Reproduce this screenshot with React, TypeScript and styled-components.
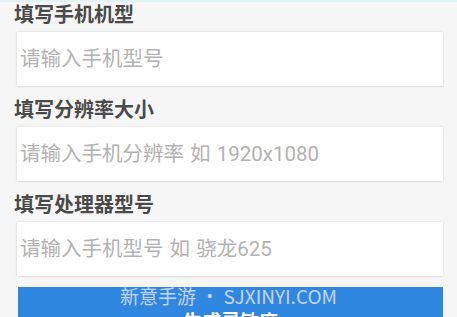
import React from 'react';
import styled, { createGlobalStyle } from 'styled-components';

const GlobalStyle = createGlobalStyle`
  html, body {
    margin: 0;
    padding: 0;
    background: #f6f6f6;
    font-family: "Noto Sans CJK SC", "Noto Sans", sans-serif;
  }
`;

const fields = [
  { label: '填写手机机型', placeholder: '请输入手机型号' },
  { label: '填写分辨率大小', placeholder: '请输入手机分辨率 如 1920x1080' },
  { label: '填写处理器型号', placeholder: '请输入手机型号 如 骁龙625' },
];

export default function App() {
  return (
    <Page>
      <GlobalStyle />
      {fields.map((f, i) => (
        <Field key={f.label} first={i === 0}>
          <Label>{f.label}</Label>
          <Input placeholder={f.placeholder} />
        </Field>
      ))}
      <SubmitButton type="button">生成灵敏度</SubmitButton>
      <Watermark>新意手游 • SJXINYI.COM</Watermark>
    </Page>
  );
}

const Page = styled.div`
  position: relative;
  height: 317px;
  overflow: hidden;
  border-top: 2px solid #e2f3f7;
  display: flex;
  flex-direction: column;
  box-sizing: border-box;
`;

const Field = styled.div<{ first?: boolean }>`
  display: flex;
  flex-direction: column;
  margin-top: ${(p) => (p.first ? '0' : '11px')};
`;

const Label = styled.div`
  padding-left: 14px;
  margin-bottom: 6px;
  line-height: 24px;
  font-size: 20px;
  font-weight: 700;
  color: #4a4a4a;
`;

const Input = styled.input`
  margin: 0 14px 0 17px;
  height: 54px;
  box-sizing: border-box;
  padding: 0 0 0 3px;
  border: none;
  outline: none;
  background: #fff;
  box-shadow: 0 0 2px rgba(0, 0, 0, 0.12), 0 1px 2px rgba(0, 0, 0, 0.06);
  font-family: Roboto, "Noto Sans CJK SC", sans-serif;
  font-size: 20.5px;
  word-spacing: 1px;
  color: #333;

  &::placeholder {
    color: #b2b2b2;
  }
`;

const SubmitButton = styled.button`
  margin: 11px 14px 0 18px;
  height: 66px;
  flex-shrink: 0;
  border: none;
  background: #2f87df;
  color: #fff;
  font-family: inherit;
  font-size: 19px;
  font-weight: 700;
  padding: 0;
`;

const Watermark = styled.div`
  position: absolute;
  left: 0;
  right: 0;
  top: 280px;
  text-align: center;
  font-size: 19px;
  color: rgba(226, 226, 255, 0.85);
  pointer-events: none;
`;
